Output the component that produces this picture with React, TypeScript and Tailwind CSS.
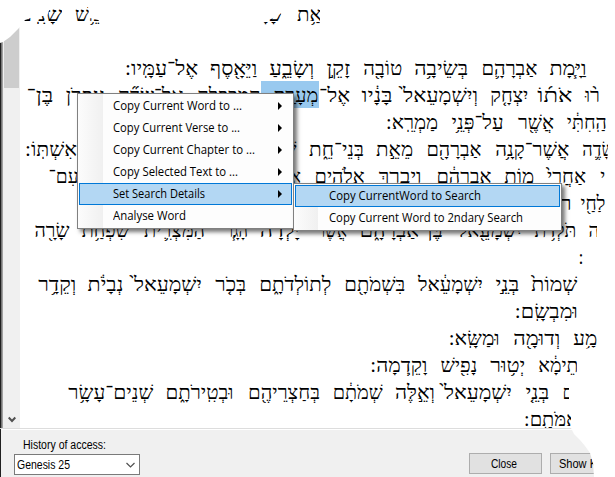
import { useLayoutEffect, useRef } from 'react';

// Text scaled horizontally so that it fills the width of its box.
function Fit({ text, w, rtl }: { text: string; w: number; rtl?: boolean }) {
  const ref = useRef<HTMLSpanElement>(null);
  useLayoutEffect(() => {
    const el = ref.current;
    if (el && el.offsetWidth) {
      el.style.transform = 'none';
      el.style.transform = `scaleX(${w / el.getBoundingClientRect().width})`;
    }
  }, [w, text]);
  return (
    <span dir={rtl ? 'rtl' : 'ltr'} className="block shrink-0 whitespace-nowrap" style={{ width: w }}>
      <span ref={ref} className={rtl ? 'inline-block origin-right' : 'inline-block origin-left'}>{text}</span>
    </span>
  );
}

type Word = [string, number, number];

// Words of each verse line, ordered from the left edge: text, left, right.
const lines: Word[][] = [
  [['שָׁנִֽים', 17, 62], ['וְחָמֵ֥שׁ', 75, 118], ['שָׁנָ֖ה', 246, 283], ['מְאַ֥ת', 297, 334]],
  [],
  [['אֶל־עַמָּֽיו:', 125, 198], ['וַיֵּאָ֖סֶף', 210, 257], ['וְשָׂבֵ֑עַ', 269, 314], ['זָקֵ֣ן', 326, 350], ['טוֹבָ֖ה', 363, 402], ['בְּשֵׂיבָ֥ה', 414, 468], ['אַבְרָהָ֛ם', 481, 537], ['וַיָּ֧מָת', 549, 586]],
  [['בֶּן־', 26, 53], ['עֶפְרֹ֤ן', 66, 105], ['אֶל־שְׂדֵ֞ה', 118, 183], ['הַמַּכְפֵּלָ֑ה', 197, 260], ['מְעָרַ֖ת', 273, 318], ['אֶל־', 319, 350], ['בָּנָ֔יו', 362, 393], ['וְיִשְׁמָעֵאל֙', 403, 478], ['יִצְחָ֤ק', 490, 528], ['אֹת֜וֹ', 537, 572], ['ר֨וּ', 585, 600]],
  [['מַמְרֵֽא:', 386, 438], ['עַל־פְּנֵ֥י', 452, 504], ['אֲשֶׁ֖ר', 518, 554], ['הַֽחִתִּ֔י', 567, 607]],
  [['אִשְׁתּֽוֹ:', 25, 77], ['שָׁ֛מָּה', 260, 297], ['בְּנֵי־חֵ֑ת', 309, 364], ['מֵאֵ֣ת', 376, 413], ['אַבְרָהָ֖ם', 426, 481], ['אֲשֶׁר־קָנָ֥ה', 495, 569], ['שָּׂדֶ֛ה', 582, 614]],
  [['עִם־', 48, 78], ['אֶת־', 275, 301], ['אֱלֹהִ֖ים', 315, 365], ['וַיְבָ֥רֶךְ', 379, 422], ['אַבְרָהָ֔ם', 436, 491], ['מ֣וֹת', 504, 534], ['אַחֲרֵי֙', 547, 586], ['י', 600, 605]],
  [['רֹאִֽי:', 534, 572], ['לַחַ֖י', 580, 605]],
  [['שָׂרָ֖ה', 34, 69], ['שִׁפְחַ֥ת', 82, 130], ['הַמִּצְרִ֛ית', 144, 205], ['הָגָ֧ר', 225, 248], ['יָלְדָ֜ה', 260, 301], ['אֲשֶׁ֨ר', 317, 347], ['בֶּן־אַבְרָהָ֑ם', 360, 443], ['יִשְׁמָעֵ֖אל', 458, 522], ['תֹּלְדֹ֥ת', 534, 576], ['ה', 589, 600]],
  [[':', 579, 584]],
  [['וְקֵדָ֥ר', 38, 76], ['נְבָיֹ֔ת', 88, 124], ['יִשְׁמָעֵאל֙', 134, 202], ['בְּכֹ֤ר', 215, 246], ['לְתוֹלְדֹתָ֑ם', 259, 331], ['בִּשְׁמֹתָ֖ם', 344, 405], ['יִשְׁמָעֵ֔אל', 418, 483], ['בְּנֵ֣י', 495, 519], ['שְׁמוֹת֙', 531, 577]],
  [['וּמִבְשָֽׂם:', 515, 578]],
  [['וּמַשָּֽׂא:', 449, 500], ['וְדוּמָ֖ה', 513, 560], ['מָ֥ע', 573, 597]],
  [['וָקֵֽדְמָה:', 370, 427], ['נָפִ֖ישׁ', 440, 477], ['יְט֥וּר', 490, 525], ['תֵימָ֔א', 538, 578]],
  [['שְׁנֵים־עָשָׂ֥ר', 68, 153], ['וּבְטִֽירֹתָ֑ם', 166, 234], ['בְּחַצְרֵיהֶ֖ם', 248, 320], ['שְׁמֹתָ֔ם', 333, 383], ['וְאֵ֣לֶּה', 395, 435], ['יִשְׁמָעֵאל֙', 444, 512], ['בְּנֵ֤י', 525, 549], ['ם', 562, 573]],
  [['אמֹּתָֽם:', 524, 578]],
];

const menu: [string, number, boolean][] = [
  ['Copy Current Word to ...', 129, true],
  ['Copy Current Verse to ...', 127, true],
  ['Copy Current Chapter to ...', 142, true],
  ['Copy Selected Text to ...', 125, true],
  ['Set Search Details', 92, true],
  ['Analyse Word', 73, false],
];

const submenu: [string, number][] = [
  ['Copy CurrentWord to Search', 152],
  ['Copy Current Word to 2ndary Search', 194],
];

function Row({ label, w, active, arrow }: { label: string; w: number; active?: boolean; arrow?: boolean }) {
  return (
    <div className={`flex h-[22px] items-center border pl-[33px] ${active ? 'border-[#0078d7] bg-[#b3d7f3]' : 'border-transparent'}`}>
      <Fit text={label} w={w} />
      {arrow && (
        <svg className="mr-[9px] ml-auto h-2 w-1" viewBox="0 0 4 8"><path d="M0 0L4 4L0 8Z" fill="#000" /></svg>
      )}
    </div>
  );
}

export default function App() {
  return (
    <div className="relative flex h-[477px] w-[615px] flex-col overflow-hidden bg-white font-['Open_Sans','Noto_Sans',sans-serif] text-[12px] text-black">
      <main className="flex h-[428px]">
        <div className="w-px bg-[#202020]" />
        <div className="w-px bg-[#777777]" />
        <div className="w-px bg-[#a0a0a0]" />
        <div className="w-px bg-[#f0f0f0]" />
        <aside className="flex w-4 flex-col justify-between bg-[#f0f0f0]">
          <div className="h-[88px] w-[15px] bg-[#cdcdcd]" />
          <svg className="mb-1 ml-1 h-2 w-2" viewBox="0 0 8 8"><path d="M.7 1.5L4 5L7.3 1.5" fill="none" stroke="#505050" strokeWidth="2" /></svg>
        </aside>
        <div className="relative -ml-5 flex w-[615px] shrink-0 flex-col font-['Liberation_Serif',serif] text-[20px] leading-[29px]">
          {lines.map((words, i) => (
            <div key={i} className="flex h-[27px] shrink-0">
              {words.map(([text, left, right], j) => (
                <div
                  key={j}
                  className={i === 3 && j === 4 ? 'bg-[#99c9ef] shadow-[-12px_0_0_#99c9ef,1px_0_0_#99c9ef]' : ''}
                  style={{ marginLeft: left - (j ? words[j - 1][2] : 0), width: right - left }}
                >
                  <Fit rtl text={text} w={right - left} />
                </div>
              ))}
            </div>
          ))}
        </div>
      </main>
      <footer className="relative flex h-[49px] border-t border-[#dddddd] bg-[#f0f0f0] font-['Liberation_Sans',sans-serif] shadow-[inset_0_1px_0_#fff]">
        <div className="w-px bg-[#202020]" />
        <div className="flex w-[139px] flex-col pt-[7px] pl-[13px]">
          <div className="flex h-[18px] items-center pl-[9px]"><Fit text="History of access:" w={83} /></div>
          <div className="flex h-[21px] w-[126px] shrink-0 items-center justify-between border border-[#7a7a7a] bg-white pr-1 pl-[2px]">
            <Fit text="Genesis 25" w={53} />
            <svg className="h-2 w-[9px]" viewBox="0 0 9 8"><path d="M.5 2L4.5 6L8.5 2" fill="none" stroke="#505050" strokeWidth="1.2" /></svg>
          </div>
        </div>
        <div className="mt-[24px] ml-[329px] flex h-[21px] w-[73px] shrink-0 items-center justify-center border border-[#adadad] bg-[#e1e1e1] pr-[3px]"><Fit text="Close" w={26} /></div>
        <div className="mt-[24px] ml-2 flex h-[21px] w-[65px] shrink-0 items-center border border-[#adadad] bg-[#e1e1e1] pl-2"><Fit text="Show K" w={38} /></div>
      </footer>
      <svg className="absolute inset-0 h-full w-full" viewBox="0 0 615 477" fill="#fff">
        <path d="M0 0H615V24H607L600 55H585L590 48L560 27H320V7H297L295 27L283 27L281 13L275 17L263 23V29H110L98 20L90 18L88 7H75L73 14L62 26V9L50 8L47 16L36 16L25 20L19 28L10 37L3 42L0 43Z" />
        <path d="M615 24V477H594L593 463L590 453L585 446L580 440L574 434L571 428L571 410L569 400L569 382H577V350L597 347L597 325L600 250L597 240V215L606 207L607 170L608 145L608 110L600 108V85L588 74V24Z" />
      </svg>
      <div className="absolute top-[93px] left-[77px] w-[217px] border border-[#808080] bg-[linear-gradient(to_right,#fcfcfc_0,#f0f0f0_25px,#fdfdfd_25px)] p-px shadow-[3px_3px_4px_#00000088]">
        {menu.map(([label, w, arrow], i) => <Row key={label} label={label} w={w} arrow={arrow} active={i === 4} />)}
      </div>
      <div className="absolute top-[183px] left-[293px] w-[269px] border border-[#808080] bg-[linear-gradient(to_right,#fcfcfc_0,#f0f0f0_24px,#fdfdfd_24px)] p-px shadow-[3px_3px_4px_#00000088]">
        {submenu.map(([label, w], i) => <Row key={label} label={label} w={w} active={i === 0} />)}
      </div>
    </div>
  );
}
